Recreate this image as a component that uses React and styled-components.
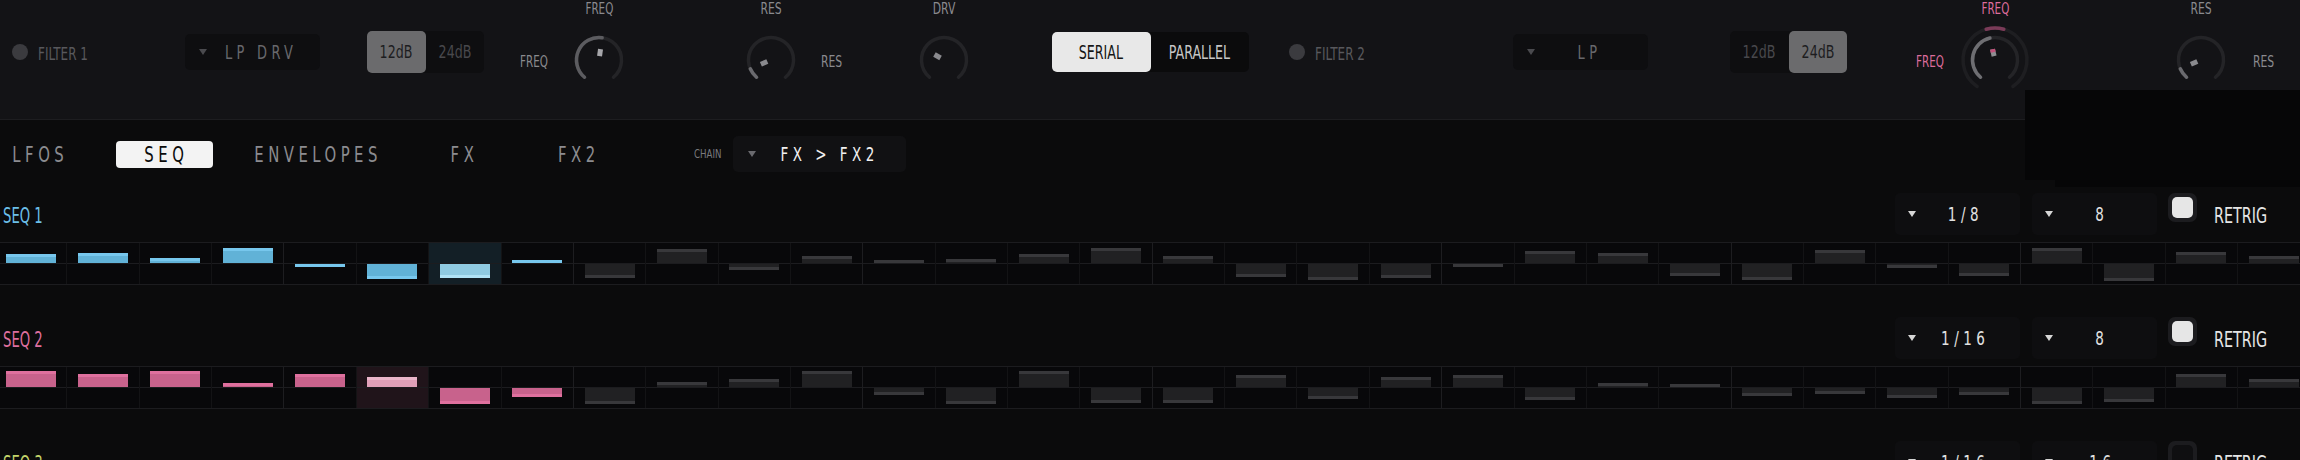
import React from "react";
import styled, { createGlobalStyle } from "styled-components";

const GlobalStyle = createGlobalStyle`
  html, body {
    margin: 0;
    padding: 0;
    background: #0b0b0c;
    overflow: hidden;
  }
  body {
    font-family: "DejaVu Sans Condensed", "Liberation Sans", sans-serif;
    font-stretch: condensed;
  }
  * {
    box-sizing: border-box;
  }
`;

const SEQ1 = [8.7, 10, 5, 15.3, -3, -14.7, -14, 3, -14, 14, -5.7, 7, 3.3, 4.3, 9.3, 14.7, 7, -12.7, -15.7, -14, -2.5, 12, 10, -11.7, -15.7, 13, -4, -11.7, 14.7, -16.7, 11.3, 6.7];
const SEQ2 = [15.7, 13.3, 15.7, 4.3, 13, 9.7, -16.3, -8.7, -16.3, 5, 8.3, 15.7, -6.7, -16.3, 15.7, -15.3, -15.3, 12.3, -11.3, 10.3, 11.7, -12.3, 3.7, 3.3, -8, -6, -10, -6.7, -16, -14, 13.3, 8.3];
const SEQ3 = [6, -8, 12, -4, 9, -12, 3, 14, -6, 8, -10, 5, 11, -3, -14, 7, 4, -9, 13, -5, 10, -7, 2, 15, -11, 6, -4, 12, -8, 9, -13, 5];

const SEQS = [
  {
    name: "SEQ 1",
    values: SEQ1,
    rate: "1/8",
    steps: "8",
    retrig: true,
    current: 6,
    label: "#6bbfe8",
    body: "#61b2d7",
    band: "#77c7ed",
    curBody: "#8fcae1",
    curBand: "#b0e2f5",
    curBg: "#131f26",
  },
  {
    name: "SEQ 2",
    values: SEQ2,
    rate: "1/16",
    steps: "8",
    retrig: true,
    current: 5,
    label: "#de6f9e",
    body: "#c8628c",
    band: "#df709e",
    curBody: "#e0a0b8",
    curBand: "#ebb6ca",
    curBg: "#20141a",
  },
  {
    name: "SEQ 3",
    values: SEQ3,
    rate: "1/16",
    steps: "16",
    retrig: false,
    current: -1,
    label: "#c3d46a",
    body: "#a9bb52",
    band: "#c3d46a",
    curBody: "#c3d46a",
    curBand: "#d6e48c",
    curBg: "#171a10",
  },
];

const pt = (c, r, a) => {
  const rad = (a * Math.PI) / 180;
  return [c + r * Math.sin(rad), c - r * Math.cos(rad)];
};

const arc = (c, r, a0, a1) => {
  const [x0, y0] = pt(c, r, a0);
  const [x1, y1] = pt(c, r, a1);
  const large = a1 - a0 > 180 ? 1 : 0;
  return `M${x0.toFixed(2)} ${y0.toFixed(2)} A${r} ${r} 0 ${large} 1 ${x1.toFixed(2)} ${y1.toFixed(2)}`;
};

function Dial({ angle, fill, pointer = "#8a8a8e", tip, ring }) {
  const size = ring ? 72 : 52;
  const c = size / 2;
  return (
    <svg width={size} height={size} viewBox={`0 0 ${size} ${size}`}>
      {ring && (
        <>
          <path d={arc(c, 32, -146, 146)} stroke="#1e1e21" strokeWidth="3.5" fill="none" strokeLinecap="round" />
          <path d={arc(c, 32, -16, 16)} stroke={ring} strokeWidth="3.5" fill="none" strokeLinecap="round" />
        </>
      )}
      <path d={arc(c, 22.5, -140, 140)} stroke="#242427" strokeWidth="3.5" fill="none" strokeLinecap="round" />
      {fill && (
        <path d={arc(c, 22.5, -140, angle)} stroke={fill} strokeWidth="3.5" fill="none" strokeLinecap="round" />
      )}
      <g transform={`rotate(${angle} ${c} ${c})`}>
        <rect x={c - 2.5} y={c - 11} width="5" height="7" fill={pointer} />
        {tip && <rect x={c - 2.5} y={c - 11} width="5" height="3" fill={tip} />}
      </g>
    </svg>
  );
}

// the panel font is a tall condensed face; squeeze the closest installed one
const Narrow = styled.span`
  display: inline-block;
  white-space: nowrap;
  transform: scaleX(${(p) => p.$x || 0.75});
  transform-origin: ${(p) => p.$o || "center"};
`;

const Page = styled.div`
  position: relative;
  width: 2300px;
  height: 460px;
  overflow: hidden;
  background: #0b0b0c;
`;

const TopBar = styled.div`
  display: flex;
  align-items: center;
  height: 120px;
  padding: 0 0 16px 12px;
  background: #131316;
  border-bottom: 1px solid #1d1d20;
`;

const Power = styled.span`
  width: 16px;
  height: 16px;
  border-radius: 50%;
  background: #3b3b3f;
  margin-left: ${(p) => p.$ml || 0}px;
  flex: none;
`;

const FilterName = styled.span`
  width: ${(p) => p.$w}px;
  margin-left: 10px;
  margin-top: 4px;
  font-size: 18px;
  color: #58585c;
  flex: none;
`;

const Select = styled.div`
  display: flex;
  align-items: center;
  flex: none;
  width: ${(p) => p.$w}px;
  height: ${(p) => p.$h}px;
  margin-left: ${(p) => p.$ml || 0}px;
  padding-left: ${(p) => p.$pl || 14}px;
  background: ${(p) => p.$bg || "#0e0e10"};
  border-radius: 5px;
`;

const Caret = styled.span`
  width: 0;
  height: 0;
  border-left: 4px solid transparent;
  border-right: 4px solid transparent;
  border-top: 6px solid ${(p) => p.$color};
  flex: none;
`;

const SelectText = styled.span`
  flex: 1;
  text-align: center;
  padding-right: ${(p) => p.$pr || 0}px;
  font-size: ${(p) => p.$size}px;
  letter-spacing: ${(p) => p.$ls}px;
  color: ${(p) => p.$color};
  white-space: nowrap;
`;

const Segmented = styled.div`
  display: flex;
  flex: none;
  width: ${(p) => p.$w}px;
  height: ${(p) => p.$h}px;
  margin-left: ${(p) => p.$ml || 0}px;
  background: ${(p) => p.$bg};
  border-radius: 5px;
`;

const Segment = styled.div`
  flex: 1;
  display: flex;
  align-items: center;
  justify-content: center;
  border-radius: 5px;
  font-size: ${(p) => p.$size || 18}px;
  background: ${(p) => (p.$on ? p.$onBg : "transparent")};
  color: ${(p) => (p.$on ? p.$onColor : p.$offColor)};
`;

const KnobUnit = styled.div`
  display: flex;
  align-self: flex-start;
  flex: none;
  margin-left: ${(p) => p.$ml || 0}px;
`;

const KnobCol = styled.div`
  display: flex;
  flex-direction: column;
  align-items: center;
  width: ${(p) => p.$w}px;
  svg {
    margin-top: ${(p) => (p.$w > 60 ? 6 : 16)}px;
    display: block;
  }
`;

const TopLabel = styled.span`
  height: 18px;
  line-height: 18px;
  font-size: 16px;
  white-space: nowrap;
  color: ${(p) => p.$color || "#8a8a8e"};
`;

const SideLabel = styled.span`
  width: ${(p) => p.$w}px;
  margin-top: 53px;
  margin-left: ${(p) => p.$ml || 0}px;
  line-height: 18px;
  height: 18px;
  font-size: 16px;
  white-space: nowrap;
  color: ${(p) => p.$color || "#8a8a8e"};
`;

const Overlay = styled.div`
  position: absolute;
  top: 90px;
  left: 2025px;
  width: 275px;
  height: 90px;
  background: #060607;
  &::after {
    content: "";
    position: absolute;
    top: 90px;
    left: 30px;
    width: 245px;
    height: 7px;
    background: #060607;
  }
`;

const TabRow = styled.div`
  display: flex;
  align-items: center;
  height: 73px;
  padding-bottom: 5px;
`;

const Tab = styled.div`
  flex: none;
  width: ${(p) => p.$w}px;
  height: 27px;
  margin-left: ${(p) => p.$ml || 0}px;
  padding-left: 4px;
  display: flex;
  align-items: center;
  justify-content: center;
  border-radius: 4px;
  font-size: 22px;
  letter-spacing: 6px;
  background: ${(p) => (p.$active ? "#f3f3f3" : "transparent")};
  color: ${(p) => (p.$active ? "#0a0a0a" : "#8c8c90")};
`;

const ChainLabel = styled.span`
  width: 32px;
  margin-left: 69px;
  font-size: 12px;
  color: #7a7a7e;
  flex: none;
`;

const SeqBlock = styled.section`
  margin-bottom: 32px;
`;

const SeqHeader = styled.div`
  display: flex;
  align-items: flex-start;
  height: 49px;
  padding: 0 32px 0 3px;
`;

const SeqName = styled.span`
  line-height: 46px;
  font-size: 21px;
  color: ${(p) => p.$color};
`;

const Controls = styled.div`
  display: flex;
  align-items: flex-start;
  margin-left: auto;
`;

const Check = styled.div`
  width: 29px;
  height: 29px;
  margin-left: 11px;
  padding: 4px;
  border-radius: 7px;
  background: #1c1c1f;
  span {
    display: block;
    width: 100%;
    height: 100%;
    border-radius: 5px;
    background: ${(p) => (p.$on ? "#e6e6e6" : "#0f0f11")};
  }
`;

const Retrig = styled.span`
  width: 54px;
  margin-left: 17px;
  line-height: 46px;
  font-size: 21px;
  color: #e6e6e6;
`;

const Grid = styled.div`
  display: grid;
  grid-template-columns: repeat(32, 72.37px);
  width: 2316px;
  margin-left: -6px;
  border-top: 1px solid #1c1c1f;
  border-bottom: 1px solid #1c1c1f;
`;

const Cell = styled.div`
  display: grid;
  grid-template-rows: 20px 1px 20px;
  border-left: 1px solid ${(p) => (p.$major ? "#1d1d20" : "#131315")};
  background: ${(p) => p.$bg || "#08080a"};
`;

const Half = styled.div`
  display: flex;
  flex-direction: column;
  align-items: center;
  justify-content: ${(p) => (p.$up ? "flex-end" : "flex-start")};
  overflow: hidden;
`;

const Mid = styled.div`
  background: #1c1c1f;
`;

const Bar = styled.div`
  width: 50px;
  background: ${(p) => p.$body};
  border-top: ${(p) => (p.$up ? `3px solid ${p.$band}` : "none")};
  border-bottom: ${(p) => (p.$up ? "none" : `3px solid ${p.$band}`)};
`;

function Step({ value, index, seq }) {
  const lit = index < 8;
  const cur = index === seq.current;
  const body = cur ? seq.curBody : lit ? seq.body : "#212123";
  const band = cur ? seq.curBand : lit ? seq.band : "#38383b";
  const up = value >= 0;
  const h = Math.max(3, Math.abs(value));
  const bar = <Bar $up={up} $body={body} $band={band} style={{ height: h }} />;
  return (
    <Cell $major={index % 4 === 0} $bg={cur ? seq.curBg : null}>
      <Half $up>{up && bar}</Half>
      <Mid />
      <Half>{!up && bar}</Half>
    </Cell>
  );
}

function SeqSelect({ ml, value }) {
  return (
    <Select $w={125} $h={42} $ml={ml} $pl={13}>
      <Caret $color="#d6d6d6" />
      <SelectText $size={20} $ls={6} $pr={6} $color="#e2e2e2">
        <Narrow>{value}</Narrow>
      </SelectText>
    </Select>
  );
}

function Sequence({ seq }) {
  return (
    <SeqBlock>
      <SeqHeader>
        <SeqName $color={seq.label}>
          <Narrow $x={0.7} $o="left">
            {seq.name}
          </Narrow>
        </SeqName>
        <Controls>
          <SeqSelect value={seq.rate} />
          <SeqSelect ml={12} value={seq.steps} />
          <Check $on={seq.retrig}>
            <span />
          </Check>
          <Retrig>
            <Narrow $x={0.76} $o="left">
              RETRIG
            </Narrow>
          </Retrig>
        </Controls>
      </SeqHeader>
      <Grid>
        {seq.values.map((v, i) => (
          <Step key={i} value={v} index={i} seq={seq} />
        ))}
      </Grid>
    </SeqBlock>
  );
}

function DbSwitch({ ml, active }) {
  return (
    <Segmented $w={117} $h={42} $ml={ml} $bg="#0e0e10">
      {["12dB", "24dB"].map((t) => (
        <Segment key={t} $on={t === active} $onBg="#6b6b6d" $onColor="#1d1d1f" $offColor="#48484c">
          <Narrow $x={0.78}>{t}</Narrow>
        </Segment>
      ))}
    </Segmented>
  );
}

function FilterSelect({ value }) {
  return (
    <Select $w={135} $h={36} $pl={14}>
      <Caret $color="#4a4a4e" />
      <SelectText $size={20} $ls={6} $pr={5} $color="#68686c">
        <Narrow $x={0.72}>{value}</Narrow>
      </SelectText>
    </Select>
  );
}

export default function App() {
  return (
    <Page>
      <GlobalStyle />
      <TopBar>
        <Power />
        <FilterName $w={147}>
          <Narrow $x={0.74} $o="left">
            FILTER 1
          </Narrow>
        </FilterName>
        <FilterSelect value="LP DRV" />
        <DbSwitch ml={47} active="12dB" />

        <KnobUnit $ml={36}>
          <SideLabel $w={53}>
            <Narrow $x={0.72} $o="left">
              FREQ
            </Narrow>
          </SideLabel>
          <KnobCol $w={52}>
            <TopLabel>
              <Narrow $x={0.72}>FREQ</Narrow>
            </TopLabel>
            <Dial angle={8} fill="#5c5c60" pointer="#a6a6aa" />
          </KnobCol>
        </KnobUnit>
        <KnobUnit $ml={120}>
          <KnobCol $w={52}>
            <TopLabel>
              <Narrow>RES</Narrow>
            </TopLabel>
            <Dial angle={-113} fill="#6a6a6e" />
          </KnobCol>
          <SideLabel $w={30} $ml={24}>
            <Narrow $o="left">RES</Narrow>
          </SideLabel>
        </KnobUnit>
        <KnobUnit $ml={67}>
          <KnobCol $w={52}>
            <TopLabel>
              <Narrow>DRV</Narrow>
            </TopLabel>
            <Dial angle={-60} />
          </KnobCol>
        </KnobUnit>

        <Segmented $w={197} $h={40} $ml={82} $bg="#0b0b0c">
          <Segment $on $size={19} $onBg="#e8e8e8" $onColor="#151515">
            <Narrow $x={0.74}>SERIAL</Narrow>
          </Segment>
          <Segment $size={19} $offColor="#c6c6c6">
            <Narrow $x={0.74}>PARALLEL</Narrow>
          </Segment>
        </Segmented>

        <Power $ml={40} />
        <FilterName $w={198}>
          <Narrow $x={0.74} $o="left">
            FILTER 2
          </Narrow>
        </FilterName>
        <FilterSelect value="LP" />
        <DbSwitch ml={82} active="24dB" />

        <KnobUnit $ml={69}>
          <SideLabel $w={43} $color="#dc6c9c">
            <Narrow $x={0.72} $o="left">
              FREQ
            </Narrow>
          </SideLabel>
          <KnobCol $w={72}>
            <TopLabel $color="#dc6c9c">
              <Narrow $x={0.72}>FREQ</Narrow>
            </TopLabel>
            <Dial angle={-13} ring="#7a3b58" fill="#6e6e72" pointer="#8e8e92" tip="#c2507a" />
          </KnobCol>
        </KnobUnit>
        <KnobUnit $ml={144}>
          <KnobCol $w={52}>
            <TopLabel>
              <Narrow>RES</Narrow>
            </TopLabel>
            <Dial angle={-113} fill="#6a6a6e" />
          </KnobCol>
          <SideLabel $w={30} $ml={26}>
            <Narrow $o="left">RES</Narrow>
          </SideLabel>
        </KnobUnit>
      </TopBar>

      <TabRow>
        <Tab $w={77}>
          <Narrow>LFOS</Narrow>
        </Tab>
        <Tab $w={97} $ml={39} $active>
          <Narrow>SEQ</Narrow>
        </Tab>
        <Tab $w={130} $ml={38}>
          <Narrow>ENVELOPES</Narrow>
        </Tab>
        <Tab $w={97} $ml={33}>
          <Narrow>FX</Narrow>
        </Tab>
        <Tab $w={97} $ml={17}>
          <Narrow>FX2</Narrow>
        </Tab>
        <ChainLabel>
          <Narrow $x={0.8} $o="left">
            CHAIN
          </Narrow>
        </ChainLabel>
        <Select $w={173} $h={36} $ml={7} $pl={15} $bg="#111113">
          <Caret $color="#6a6a6e" />
          <SelectText $size={20} $ls={6} $pr={2} $color="#f0f0f0">
            <Narrow>FX &gt; FX2</Narrow>
          </SelectText>
        </Select>
      </TabRow>

      {SEQS.map((s) => (
        <Sequence key={s.name} seq={s} />
      ))}

      <Overlay />
    </Page>
  );
}
